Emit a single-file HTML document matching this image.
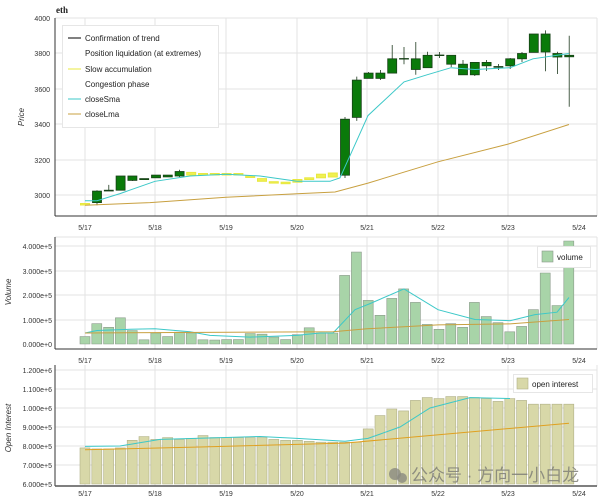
<!DOCTYPE html>
<html><head><meta charset="utf-8"><style>
body{margin:0;background:#fff;}
svg{display:block;font-family:"Liberation Sans",sans-serif;}
.g line{stroke:#e3e3e3;stroke-width:1}
.t{font-size:7px;fill:#333}
</style></head><body>
<svg width="600" height="500" viewBox="0 0 600 500">
<text x="56" y="13" font-size="9" font-family="Liberation Serif" font-weight="bold" fill="#222">eth</text>
<g class="g">
<line x1="55" y1="18" x2="597" y2="18"/><line x1="55" y1="53" x2="597" y2="53"/><line x1="55" y1="89" x2="597" y2="89"/><line x1="55" y1="124" x2="597" y2="124"/><line x1="55" y1="160" x2="597" y2="160"/><line x1="55" y1="195" x2="597" y2="195"/>
<line x1="85" y1="18" x2="85" y2="216"/><line x1="155" y1="18" x2="155" y2="216"/><line x1="226" y1="18" x2="226" y2="216"/><line x1="297" y1="18" x2="297" y2="216"/><line x1="367" y1="18" x2="367" y2="216"/><line x1="438" y1="18" x2="438" y2="216"/><line x1="508" y1="18" x2="508" y2="216"/><line x1="597" y1="18" x2="597" y2="216"/>
</g>
<line x1="55" y1="18" x2="55" y2="216" stroke="#333"/>
<line x1="55" y1="216" x2="597" y2="216" stroke="#333"/>
<g class="t" text-anchor="end"><text x="50" y="21">4000</text><text x="50" y="56">3800</text><text x="50" y="92">3600</text><text x="50" y="127">3400</text><text x="50" y="163">3200</text><text x="50" y="198">3000</text></g>
<text transform="translate(24,117) rotate(-90)" font-size="8" font-style="italic" fill="#333" text-anchor="middle">Price</text>
<g class="t" text-anchor="middle"><text x="85" y="230">5/17</text><text x="155" y="230">5/18</text><text x="226" y="230">5/19</text><text x="297" y="230">5/20</text><text x="367" y="230">5/21</text><text x="438" y="230">5/22</text><text x="508" y="230">5/23</text><text x="579" y="230">5/24</text></g>
<g fill="#f0f050" stroke="#e8e840" stroke-width="1">
<rect x="80.5" y="203.5" width="9" height="1.5"/>
<rect x="186.7" y="172.4" width="9" height="2.7"/>
<rect x="198.5" y="173.5" width="9" height="1.5"/><rect x="210.3" y="173.5" width="9" height="1.5"/><rect x="222.1" y="173.5" width="9" height="1.5"/><rect x="233.9" y="173.5" width="9" height="1.5"/>
<rect x="245.7" y="176" width="9" height="1.5"/>
<rect x="257.5" y="178.6" width="9" height="2.7"/>
<rect x="269.3" y="181.7" width="9" height="1.4"/>
<rect x="281.1" y="182.2" width="9" height="1.5"/>
<rect x="292.9" y="179.5" width="9" height="2.7"/>
<rect x="304.7" y="177.8" width="9" height="1.7"/>
<rect x="316.5" y="174.2" width="9" height="3.6"/>
<rect x="328.3" y="173" width="9" height="4"/>
</g>
<g stroke="#1e3a1e" stroke-width="0.8">
<path d="M97 205.3V190.2M108.8 190.5V184.9M120.6 176V190M132.4 176V181M156 175V178M167.8 175V177M179.6 169.8V177M345 117V178M356.8 76.6V120.9M368.6 72V78.4M380.4 70V80M392.2 45V73.1M404 64.2V47M415.8 74.8V42M427.6 67.7V51.7M439.4 52V58M451.2 55.3V67M463 70V60M474.8 62.4V76M486.6 71V60M498.4 64V70M510.2 69V58M522 52V62M533.8 34V52.4M545.6 30.4V71.3M557.4 51.7V74M569.2 35.8V106.8" fill="none"/>
</g>
<g fill="#0a7a0a" stroke="#174017" stroke-width="0.8">
<rect x="92.5" y="191.1" width="9" height="11.5"/>
<rect x="104.3" y="190.2" width="9" height="0.8"/>
<rect x="116.1" y="176" width="9" height="14.2"/>
<rect x="127.9" y="176" width="9" height="4.4"/>
<rect x="139.7" y="178.6" width="9" height="1"/>
<rect x="151.5" y="175.1" width="9" height="2.7"/>
<rect x="163.3" y="175.1" width="9" height="1.8"/>
<rect x="175.1" y="171.5" width="9" height="4.5"/>
<rect x="340.5" y="119.2" width="9" height="56"/>
<rect x="352.3" y="80.1" width="9" height="37.3"/>
<rect x="364.1" y="73.1" width="9" height="5.3"/>
<rect x="375.9" y="73.1" width="9" height="5.3"/>
<rect x="387.7" y="58.8" width="9" height="14.3"/>
<rect x="399.5" y="58.5" width="9" height="0.6"/>
<rect x="411.3" y="58.8" width="9" height="10.7"/>
<rect x="423.1" y="55.3" width="9" height="12.4"/>
<rect x="434.9" y="55" width="9" height="0.6"/>
<rect x="446.7" y="55.3" width="9" height="8.9"/>
<rect x="458.5" y="64.2" width="9" height="10.6"/>
<rect x="470.3" y="62.4" width="9" height="12.4"/>
<rect x="482.1" y="62.4" width="9" height="3.4"/>
<rect x="493.9" y="66.5" width="9" height="0.8"/>
<rect x="505.7" y="58.8" width="9" height="7"/>
<rect x="517.5" y="53.5" width="9" height="5.3"/>
<rect x="529.3" y="34" width="9" height="18.4"/>
<rect x="541.1" y="34" width="9" height="18"/>
<rect x="552.9" y="53.5" width="9" height="3.5"/>
<rect x="564.7" y="55.3" width="9" height="1.5"/>
</g>
<polyline fill="none" stroke="#3cc8c8" stroke-width="1" points="85,200.7 97,200.7 120,193.6 155,181.3 190,176 226,174.2 260,176 297,181.3 330,181.3 340,177.8 356,142.3 368,115.6 404,81.9 427,74.8 451,67.7 475,69.5 510,67.7 533,58.8 569,53.5"/>
<polyline fill="none" stroke="#c8a040" stroke-width="1" points="85,205.3 150,202.6 226,197.3 297,193.8 335,192 368,183.1 438,161.8 508,144.1 569,124.5"/>
<rect x="62.5" y="25.5" width="156" height="102" fill="#fff" stroke="#e6e6e6"/>
<g font-size="8" fill="#222">
<line x1="68" y1="38" x2="81" y2="38" stroke="#000"/><text x="85" y="41">Confirmation of trend</text>
<text x="85" y="56">Position liquidation (at extremes)</text>
<line x1="68" y1="69" x2="81" y2="69" stroke="#e8e840"/><text x="85" y="72">Slow accumulation</text>
<text x="85" y="87">Congestion phase</text>
<line x1="68" y1="99" x2="81" y2="99" stroke="#3cc8c8"/><text x="85" y="102">closeSma</text>
<line x1="68" y1="114" x2="81" y2="114" stroke="#c8a040"/><text x="85" y="117">closeLma</text>
</g>
<g class="g">
<line x1="55" y1="237" x2="597" y2="237"/><line x1="55" y1="246" x2="597" y2="246"/><line x1="55" y1="271" x2="597" y2="271"/><line x1="55" y1="295" x2="597" y2="295"/><line x1="55" y1="320" x2="597" y2="320"/>
<line x1="85" y1="237" x2="85" y2="349"/><line x1="155" y1="237" x2="155" y2="349"/><line x1="226" y1="237" x2="226" y2="349"/><line x1="297" y1="237" x2="297" y2="349"/><line x1="367" y1="237" x2="367" y2="349"/><line x1="438" y1="237" x2="438" y2="349"/><line x1="508" y1="237" x2="508" y2="349"/><line x1="597" y1="237" x2="597" y2="349"/>
</g>
<line x1="55" y1="237" x2="55" y2="349" stroke="#333"/>
<line x1="55" y1="349" x2="597" y2="349" stroke="#333"/>
<g class="t" text-anchor="end" font-size="6.5"><text x="52" y="249">4.000e+5</text><text x="52" y="274">3.000e+5</text><text x="52" y="298">2.000e+5</text><text x="52" y="323">1.000e+5</text><text x="52" y="347">0.000e+0</text></g>
<text transform="translate(11,292) rotate(-90)" font-size="8" font-style="italic" fill="#333" text-anchor="middle">Volume</text>
<g class="t" text-anchor="middle"><text x="85" y="363">5/17</text><text x="155" y="363">5/18</text><text x="226" y="363">5/19</text><text x="297" y="363">5/20</text><text x="367" y="363">5/21</text><text x="438" y="363">5/22</text><text x="508" y="363">5/23</text><text x="579" y="363">5/24</text></g>
<path fill="#a8d4a8" stroke="#8a9a8a" stroke-width="0.6" d="M80 344V336.6h10V344zM91.8 344V323.7h10V344zM103.6 344V327.3h10V344zM115.4 344V317.8h10V344zM127.2 344V330.5h10V344zM139 344V339.8h10V344zM150.8 344V333h10V344zM162.6 344V336.6h10V344zM174.4 344V332.2h10V344zM186.2 344V333h10V344zM198 344V339.8h10V344zM209.8 344V340.1h10V344zM221.6 344V339.6h10V344zM233.4 344V339.6h10V344zM245.2 344V333.5h10V344zM257 344V334.2h10V344zM268.8 344V337.1h10V344zM280.6 344V339.6h10V344zM292.4 344V334.7h10V344zM304.2 344V327.8h10V344zM316 344V333h10V344zM327.8 344V333h10V344zM339.6 344V275.4h10V344zM351.4 344V252.1h10V344zM363.2 344V300.4h10V344zM375 344V315.3h10V344zM386.8 344V298.4h10V344zM398.6 344V288.9h10V344zM410.4 344V302.4h10V344zM422.2 344V324.4h10V344zM434 344V329.3h10V344zM445.8 344V323.7h10V344zM457.6 344V327.3h10V344zM469.4 344V302.4h10V344zM481.2 344V316.6h10V344zM493 344V322.7h10V344zM504.8 344V331.8h10V344zM516.6 344V326.4h10V344zM528.4 344V309.7h10V344zM540.2 344V273h10V344zM552 344V305.5h10V344zM563.8 344V241h10V344z"/>
<polyline fill="none" stroke="#3cc8c8" stroke-width="1" points="85,333 97,330.5 130,329.3 155,328.8 190,331.8 210,335.4 250,337.1 297,335.4 320,333 333,333 355,309.7 370,303.6 404,288.9 438,309.7 475,319.5 510,320.7 535,314.6 557,312.2 569,297.5"/>
<polyline fill="none" stroke="#c8a040" stroke-width="1" points="85,333 333,331.8 367,328.8 438,324.9 510,323.9 569,319.5"/>
<rect x="537.5" y="246.5" width="53" height="21" fill="#fff" stroke="#e6e6e6"/>
<rect x="542" y="251" width="11" height="11" fill="#a8d4a8" stroke="#8a9a8a" stroke-width="0.6"/>
<text x="557" y="260" font-size="8" fill="#222">volume</text>
<g class="g">
<line x1="55" y1="370" x2="597" y2="370"/><line x1="55" y1="389" x2="597" y2="389"/><line x1="55" y1="408" x2="597" y2="408"/><line x1="55" y1="427" x2="597" y2="427"/><line x1="55" y1="446" x2="597" y2="446"/><line x1="55" y1="465" x2="597" y2="465"/>
<line x1="85" y1="365" x2="85" y2="486"/><line x1="155" y1="365" x2="155" y2="486"/><line x1="226" y1="365" x2="226" y2="486"/><line x1="297" y1="365" x2="297" y2="486"/><line x1="367" y1="365" x2="367" y2="486"/><line x1="438" y1="365" x2="438" y2="486"/><line x1="508" y1="365" x2="508" y2="486"/><line x1="597" y1="365" x2="597" y2="486"/>
</g>
<line x1="55" y1="365" x2="55" y2="486" stroke="#333"/>
<g class="t" text-anchor="end" font-size="6.5"><text x="52" y="373">1.200e+6</text><text x="52" y="392">1.100e+6</text><text x="52" y="411">1.000e+6</text><text x="52" y="430">9.000e+5</text><text x="52" y="449">8.000e+5</text><text x="52" y="468">7.000e+5</text><text x="52" y="487">6.000e+5</text></g>
<text transform="translate(11,428) rotate(-90)" font-size="8" font-style="italic" fill="#333" text-anchor="middle">Open Interest</text>
<path fill="#d8d8a8" stroke="#b0b088" stroke-width="0.6" d="M80 484V447.9h10V484zM91.8 484V448.9h10V484zM103.6 484V448.9h10V484zM115.4 484V447.9h10V484zM127.2 484V440.3h10V484zM139 484V436.5h10V484zM150.8 484V439.4h10V484zM162.6 484V437.5h10V484zM174.4 484V439.4h10V484zM186.2 484V438.4h10V484zM198 484V435.6h10V484zM209.8 484V437.5h10V484zM221.6 484V437.5h10V484zM233.4 484V437.5h10V484zM245.2 484V437.5h10V484zM257 484V437.5h10V484zM268.8 484V439.4h10V484zM280.6 484V440.3h10V484zM292.4 484V440.3h10V484zM304.2 484V441.3h10V484zM316 484V442.2h10V484zM327.8 484V442.2h10V484zM339.6 484V442.2h10V484zM351.4 484V442.2h10V484zM363.2 484V428.9h10V484zM375 484V415.6h10V484zM386.8 484V409h10V484zM398.6 484V410.9h10V484zM410.4 484V400.4h10V484zM422.2 484V397.6h10V484zM434 484V398.5h10V484zM445.8 484V396.6h10V484zM457.6 484V396.6h10V484zM469.4 484V397.6h10V484zM481.2 484V398.5h10V484zM493 484V401.4h10V484zM504.8 484V398.5h10V484zM516.6 484V400.4h10V484zM528.4 484V404.2h10V484zM540.2 484V404.2h10V484zM552 484V404.2h10V484zM563.8 484V404.2h10V484z"/>
<polyline fill="none" stroke="#3cc8c8" stroke-width="1" points="85,446.4 120,446 160,439.4 226,437.5 260,436.5 297,438.4 345,441.3 368,438.4 400,427 430,408 470,397.6 510,398.5"/>
<polyline fill="none" stroke="#e0a020" stroke-width="1" points="85,449.8 200,447 345,443.1 569,423.2"/>
<line x1="55" y1="486" x2="597" y2="486" stroke="#555" stroke-width="1.5"/>
<g class="t" text-anchor="middle"><text x="85" y="496">5/17</text><text x="155" y="496">5/18</text><text x="226" y="496">5/19</text><text x="297" y="496">5/20</text><text x="367" y="496">5/21</text><text x="438" y="496">5/22</text><text x="508" y="496">5/23</text><text x="579" y="496">5/24</text></g>
<rect x="513.5" y="374.5" width="79" height="18" fill="#fff" stroke="#e6e6e6"/>
<rect x="517" y="378" width="11" height="11" fill="#d8d8a8" stroke="#b0b088" stroke-width="0.6"/>
<text x="532" y="387" font-size="8" fill="#222">open interest</text>
<circle cx="395" cy="474" r="6" fill="#8a8a80" opacity="0.8"/><circle cx="402" cy="478" r="5" fill="#8a8a80" opacity="0.8"/>
<text x="411" y="481" font-size="17" fill="#808078" opacity="0.85" font-family="'Liberation Sans','Noto Sans CJK SC',sans-serif">公众号 · 方向一小白龙</text>
</svg>
</body></html>
